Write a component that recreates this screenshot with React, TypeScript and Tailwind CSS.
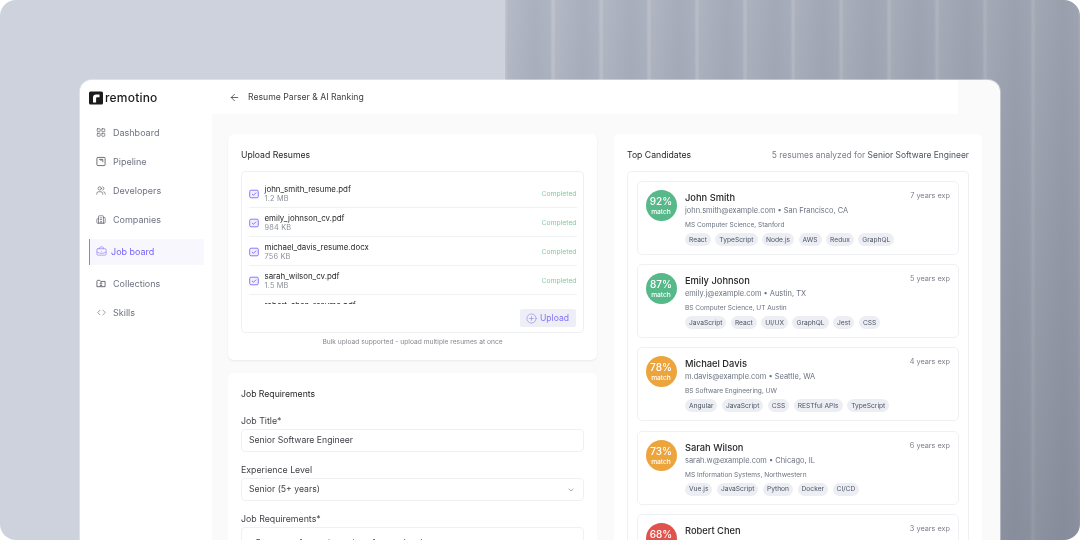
import React from "react";
import { ArrowLeft, ChevronDown, Code, LayoutGrid, Users, Building2, BriefcaseBusiness, CirclePlus } from "lucide-react";

const font = { fontFamily: "Inter, 'Liberation Sans', sans-serif" };

function Logo() {
  return (
    <svg width="14" height="14" viewBox="0 0 14 14" className="shrink-0">
      <rect x="0" y="0.5" width="14" height="13" rx="1.5" fill="#1b1b1d" />
      <path d="M4 11.5V6.5C4 4.6 5.2 3.5 7 3.5H10.5V6.3H8.2C7.5 6.3 7.1 6.7 7.1 7.4V11.5Z" fill="#fff" />
    </svg>
  );
}

function PipelineIcon() {
  return (
    <svg width="11" height="11" viewBox="0 0 11 11" fill="none" stroke="#52525b" strokeWidth="0.9">
      <rect x="1" y="1" width="9" height="9" rx="1" />
      <path d="M3.5 3.2H7.5V6.2M5.5 3.2V5" />
    </svg>
  );
}

function FolderIcon() {
  return (
    <svg width="11" height="11" viewBox="0 0 11 11" fill="none" stroke="#52525b" strokeWidth="0.9">
      <path d="M1 3V9H10V3.2H5.2L4.2 2H1.6Z" strokeLinejoin="round" />
      <circle cx="5.5" cy="5.4" r="0.9" />
      <path d="M3.9 8.4C4.2 7.3 6.8 7.3 7.1 8.4" />
    </svg>
  );
}

function FileCheck() {
  return (
    <svg width="10" height="10" viewBox="0 0 10 10" fill="none" stroke="#7c6cf6" strokeWidth="0.9" className="shrink-0">
      <rect x="0.7" y="1.2" width="8.6" height="7.6" rx="1.4" fill="#f1effe" />
      <path d="M3 4.9L4.5 6.3L7.2 3.6" />
    </svg>
  );
}

const nav = [
  { label: "Dashboard", icon: <LayoutGrid size={11} strokeWidth={1.5} color="#52525b" /> },
  { label: "Pipeline", icon: <PipelineIcon /> },
  { label: "Developers", icon: <Users size={11} strokeWidth={1.5} color="#52525b" /> },
  { label: "Companies", icon: <Building2 size={11} strokeWidth={1.5} color="#52525b" /> },
];
const nav2 = [
  { label: "Collections", icon: <FolderIcon /> },
  { label: "Skills", icon: <Code size={9} strokeWidth={1.5} color="#52525b" /> },
];

function NavItem({ label, icon }: { label: string; icon: React.ReactNode }) {
  return (
    <div className="flex h-[29px] items-center gap-[7px] pl-[16px] text-[9px] text-[#6b7280]">
      <span className="flex w-[10px] justify-center">{icon}</span>
      {label}
    </div>
  );
}

const files = [
  ["john_smith_resume.pdf", "1.2 MB"],
  ["emily_johnson_cv.pdf", "984 KB"],
  ["michael_davis_resume.docx", "756 KB"],
  ["sarah_wilson_cv.pdf", "1.5 MB"],
  ["robert_chen_resume.pdf", "2.1 MB"],
];

const candidates = [
  { pct: "92%", color: "bg-[#57b88a]", name: "John Smith", exp: "7 years exp", email: "john.smith@example.com", loc: "San Francisco, CA", edu: "MS Computer Science, Stanford", tags: ["React", "TypeScript", "Node.js", "AWS", "Redux", "GraphQL"] },
  { pct: "87%", color: "bg-[#57b88a]", name: "Emily Johnson", exp: "5 years exp", email: "emily.j@example.com", loc: "Austin, TX", edu: "BS Computer Science, UT Austin", tags: ["JavaScript", "React", "UI/UX", "GraphQL", "Jest", "CSS"] },
  { pct: "78%", color: "bg-[#eca43c]", name: "Michael Davis", exp: "4 years exp", email: "m.davis@example.com", loc: "Seattle, WA", edu: "BS Software Engineering, UW", tags: ["Angular", "JavaScript", "CSS", "RESTful APIs", "TypeScript"] },
  { pct: "73%", color: "bg-[#eca43c]", name: "Sarah Wilson", exp: "6 years exp", email: "sarah.w@example.com", loc: "Chicago, IL", edu: "MS Information Systems, Northwestern", tags: ["Vue.js", "JavaScript", "Python", "Docker", "CI/CD"] },
  { pct: "68%", color: "bg-[#e0534d]", name: "Robert Chen", exp: "3 years exp", email: "robert.c@example.com", loc: "Boston, MA", edu: "BS Computer Engineering, MIT", tags: ["React", "Python", "SQL"] },
];

function Field({ label, children }: { label: string; children: React.ReactNode }) {
  return (
    <div className="flex flex-col gap-[2px]">
      <div className="text-[8.8px] leading-[13px] text-[#3f3f46]">{label}</div>
      {children}
    </div>
  );
}

export default function App() {
  return (
    <div
      style={font}
      className="h-[540px] w-[1080px] overflow-hidden rounded-[16px] bg-[linear-gradient(#cdd2dd,#cdd2dd),linear-gradient(180deg,rgba(255,255,255,0.02),rgba(70,76,92,0.22)),linear-gradient(90deg,rgba(255,255,255,0),rgba(70,74,88,0.3)),repeating-linear-gradient(90deg,#d6dae3_0px,#c5cbd7_3px,#bac1cf_30px,#c0c7d4_45px,#d6dae3_48px)] bg-[length:505px_100%,100%_100%,100%_100%,100%_100%] bg-[position:0_0,0_0,0_0,505px_0] bg-no-repeat px-[80px] pt-[80px]"
    >
      <div className="flex h-[480px] w-[920px] overflow-hidden rounded-t-[12px] bg-[#fafafb] shadow-[0_0_0_1px_rgba(255,255,255,0.35)] blur-[0.25px]">
        <aside className="flex h-full w-[132px] shrink-0 flex-col bg-white">
          <div className="flex h-[34px] items-center gap-[2px] pl-[9px] pt-[1px]">
            <Logo />
            <span className="text-[12px] font-medium leading-none tracking-[0.2px] text-[#1b1b1d]">remotino</span>
          </div>
          <nav className="mt-[4px] flex flex-col">
            {nav.map((n) => (
              <NavItem key={n.label} {...n} />
            ))}
            <div className="my-[4.5px] ml-[9px] mr-[8px] flex h-[26px] items-center gap-[4px] border-l border-[#8b7cf8] bg-[#f8f7fe] pl-[6px] text-[9px] text-[#7462f5]">
              <BriefcaseBusiness size={11} strokeWidth={1.4} color="#8b7cf8" />
              Job board
            </div>
            {nav2.map((n) => (
              <NavItem key={n.label} {...n} />
            ))}
          </nav>
          <div className="mt-auto mb-[7px] border-t border-[#f3f4f8]" />
        </aside>

        <main className="flex min-w-0 flex-1 flex-col">
          <header className="mr-[42px] flex h-[34px] shrink-0 items-center gap-[8px] bg-white pl-[17px]">
            <ArrowLeft size={11} strokeWidth={1.5} color="#27272a" />
            <span className="text-[8.67px] text-[#3f3f46]">Resume Parser &amp; AI Ranking</span>
          </header>

          <div className="flex gap-[17px] pl-[16px] pr-[18px] pt-[20px]">
            <div className="flex w-[369px] shrink-0 flex-col gap-[13px]">
              <section className="h-[226px] rounded-[6px] bg-white px-[13px] pt-[14px] shadow-[0_1px_2px_rgba(30,40,80,0.08)]">
                <h2 className="text-[8.67px] font-normal leading-[14px] text-[#27272a]">Upload Resumes</h2>
                <div className="mt-[9px] flex h-[162px] flex-col rounded-[4px] border border-[#eff0f3] px-[6.5px] pt-[7px]">
                  <div className="h-[125px] shrink-0 overflow-hidden">
                    {files.map(([name, size]) => (
                      <div key={name} className="flex h-[29px] items-center gap-[6px] border-b border-[#f0f1f4] pt-[1px]">
                        <FileCheck />
                        <div className="flex-1">
                          <div className="text-[7.9px] leading-[10px] text-[#27272a]">{name}</div>
                          <div className="text-[7.33px] leading-[9px] tracking-[0.2px] text-[#8b8f98]">{size}</div>
                        </div>
                        <span className="mt-[1px] text-[6.8px] text-[#86c9a0]">Completed</span>
                      </div>
                    ))}
                  </div>
                  <div className="mt-[5px] flex justify-end">
                    <button className="mr-[1px] flex h-[18px] w-[56px] items-center justify-center gap-[3px] rounded-[2px] bg-[#eeeef7] text-[8.6px] text-[#8273f5]">
                      <CirclePlus size={11} strokeWidth={1.2} color="#8273f5" />
                      Upload
                    </button>
                  </div>
                </div>
                <p className="mt-[5px] text-center text-[6.67px] leading-[9px] text-[#85888f]">
                  Bulk upload supported - upload multiple resumes at once
                </p>
              </section>

              <section className="rounded-[6px] bg-white px-[13px] pt-[14px]">
                <h2 className="text-[8.67px] font-normal leading-[14px] text-[#27272a]">Job Requirements</h2>
                <div className="mt-[13px] flex flex-col gap-[11px]">
                  <Field label="Job Title*">
                    <div className="flex h-[23px] items-center rounded-[4px] border border-[#eff0f3] px-[7px] text-[8.67px] text-[#3f3f46]">Senior Software Engineer</div>
                  </Field>
                  <Field label="Experience Level">
                    <div className="flex h-[23px] items-center justify-between rounded-[4px] border border-[#eff0f3] pl-[7px] pr-[8px] text-[8.67px] text-[#3f3f46]">
                      Senior (5+ years)
                      <ChevronDown size={8} strokeWidth={1.5} color="#52525b" />
                    </div>
                  </Field>
                  <Field label="Job Requirements*">
                    <div className="h-[60px] rounded-[4px] border border-[#eff0f3] px-[7px] pt-[8px] text-[8.67px] leading-[14px] text-[#3f3f46]">
                      - 5+ years of experience in software development
                    </div>
                  </Field>
                </div>
              </section>
            </div>

            <section className="w-[368px] shrink-0 rounded-t-[6px] bg-white px-[13px] pt-[14px]">
              <div className="flex items-center justify-between">
                <h2 className="text-[8.67px] font-normal leading-[14px] text-[#27272a]">Top Candidates</h2>
                <p className="text-[8.45px] leading-[14px] text-[#7b7f88]">
                  5 resumes analyzed for <span className="text-[#4b5563]">Senior Software Engineer</span>
                </p>
              </div>
              <div className="mt-[9px] flex flex-col gap-[9.2px] rounded-t-[4px] border border-[#eff0f3] px-[9px] pt-[9px]">
                {candidates.map((c) => (
                  <article key={c.name} className="flex h-[74px] shrink-0 gap-[8.5px] rounded-[5px] border border-[#eef0f3] pl-[7.5px] pr-[8px] pt-[8px]">
                    <div className={`flex h-[31px] w-[31px] shrink-0 flex-col items-center justify-center gap-[1px] rounded-full pt-[1px] text-white ${c.color}`}>
                      <span className="text-[10px] font-medium leading-[12px]">{c.pct}</span>
                      <span className="text-[6.67px] font-medium leading-[9px]">match</span>
                    </div>
                    <div className="min-w-0 flex-1">
                      <div className="flex items-start justify-between">
                        <span className="text-[9.3px] font-medium leading-[15px] text-[#27272a]">{c.name}</span>
                        <span className="text-[7.3px] leading-[12px] text-[#7b7f88]">{c.exp}</span>
                      </div>
                      <div className="mt-[-1px] text-[7.45px] leading-[14px] text-[#6b7280]">{c.email} • {c.loc}</div>
                      <div className="text-[6.55px] leading-[14px] text-[#6b7280]">{c.edu}</div>
                      <div className="mt-[1px] flex gap-[4.5px]">
                        {c.tags.map((t) => (
                          <span key={t} className="flex h-[13px] items-center rounded-full bg-[#eceef3] px-[4px] text-[6.67px] text-[#4b5563]">{t}</span>
                        ))}
                      </div>
                    </div>
                  </article>
                ))}
              </div>
            </section>
          </div>
        </main>
      </div>
    </div>
  );
}
